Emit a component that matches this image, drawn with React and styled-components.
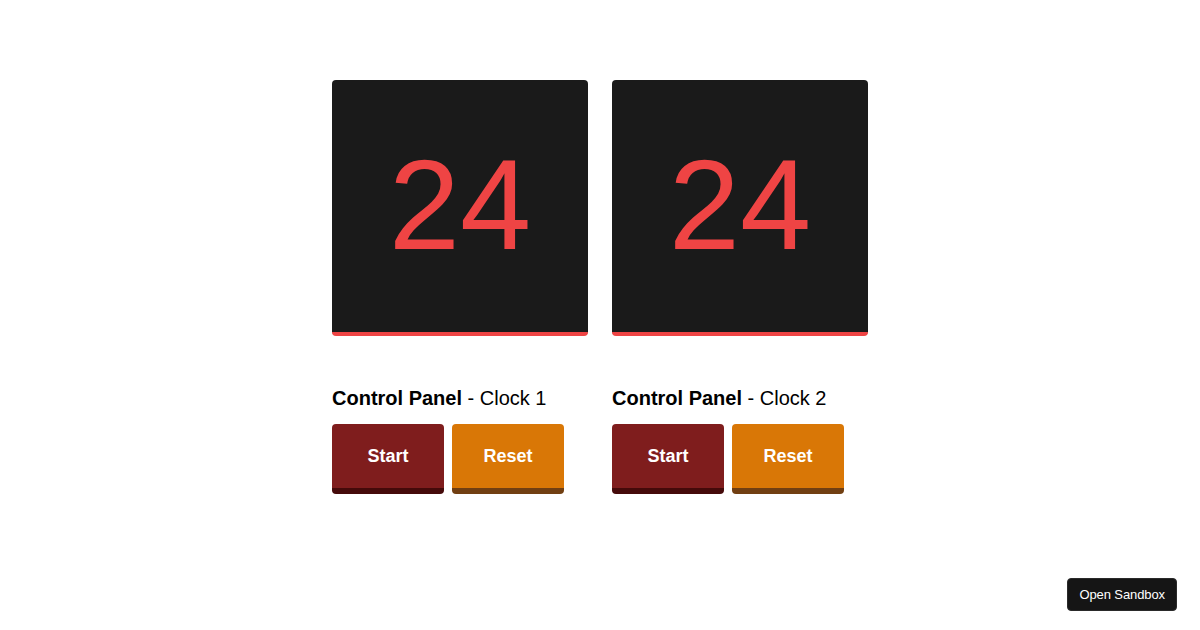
import styled, { createGlobalStyle } from 'styled-components'

const GlobalStyle = createGlobalStyle`
  html, body {
    margin: 0;
    padding: 0;
    background: #ffffff;
    font-family: "Liberation Sans", Arial, Helvetica, sans-serif;
  }
`;

const Page = styled.div`
  width: 1200px;
  height: 630px;
  position: relative;
  display: flex;
  justify-content: center;
  padding-top: 80px;
  box-sizing: border-box;
`;

const Columns = styled.div`
  display: flex;
  gap: 24px;
`;

const Column = styled.div`
  display: flex;
  flex-direction: column;
  width: 256px;
`;

const Clock = styled.div`
  width: 256px;
  height: 256px;
  box-sizing: border-box;
  background: #1a1a1a;
  border-radius: 4px;
  border-bottom: 4px solid #ef4444;
  display: flex;
  align-items: center;
  justify-content: center;
  color: #ef4444;
  font-size: 128px;
  line-height: 1;
  padding-bottom: 2px;
`;

const PanelTitle = styled.h2`
  margin: 48px 0 12px;
  font-size: 20px;
  line-height: 28px;
  font-weight: 400;
  color: #000;

  strong {
    font-weight: 700;
  }
`;

const Buttons = styled.div`
  display: flex;
  gap: 8px;
`;

const Button = styled.button`
  width: 112px;
  height: 70px;
  box-sizing: border-box;
  border: none;
  border-radius: 4px;
  border-bottom: 6px solid ${p => p.$shade};
  background: ${p => p.$bg};
  color: #fff;
  font-family: inherit;
  font-size: 18px;
  font-weight: 700;
  padding: 0;
  padding-top: 1px;
  cursor: pointer;
`;

const Sandbox = styled.button`
  position: absolute;
  right: 23px;
  bottom: 19px;
  height: 33px;
  padding: 0 11px;
  border: 1px solid #2a2a2a;
  border-radius: 4px;
  background: #151515;
  color: #fff;
  font-family: inherit;
  font-size: 13px;
  letter-spacing: -0.1px;
`;

const clocks = [1, 2];

export default function App() {
  return (
    <Page>
      <GlobalStyle />
      <Columns>
        {clocks.map(n => (
          <Column key={n}>
            <Clock>24</Clock>
            <PanelTitle>
              <strong>Control Panel</strong> - Clock {n}
            </PanelTitle>
            <Buttons>
              <Button $bg="#7f1d1d" $shade="#450a0a">Start</Button>
              <Button $bg="#d97706" $shade="#713f12">Reset</Button>
            </Buttons>
          </Column>
        ))}
      </Columns>
      <Sandbox>Open Sandbox</Sandbox>
    </Page>
  );
}
